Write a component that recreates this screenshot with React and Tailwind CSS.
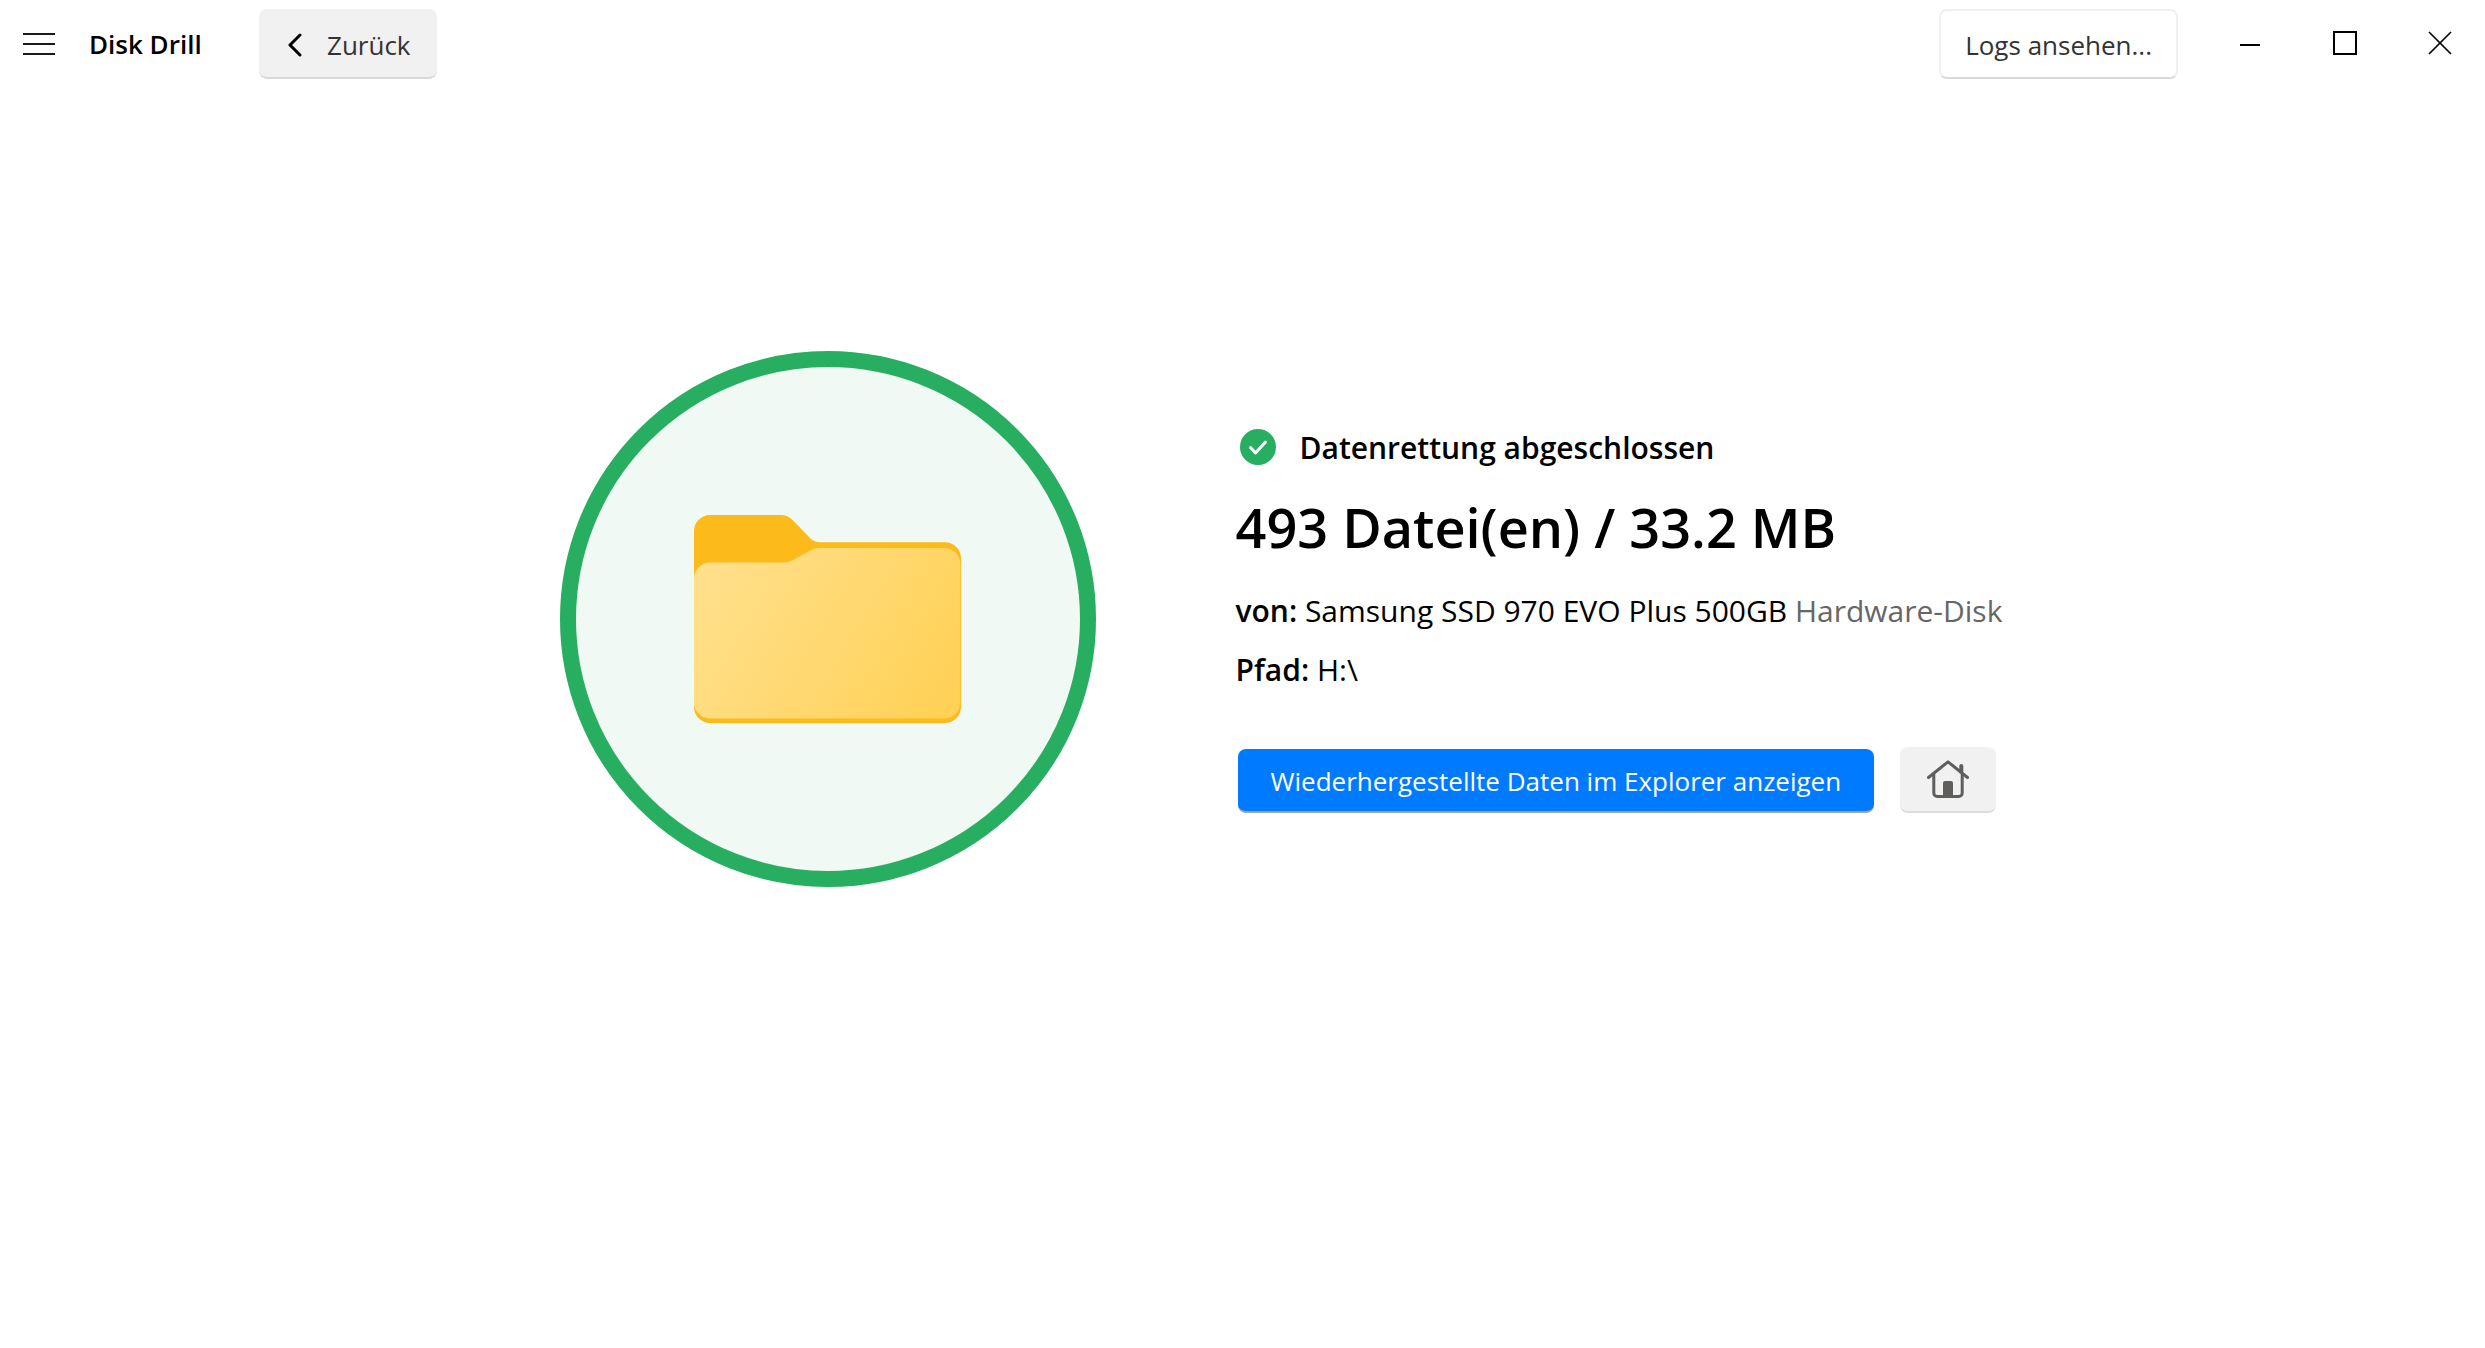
function MenuIcon() {
  return (
    <svg className="w-8 h-6" viewBox="0 0 32 24" fill="none" stroke="#1a1a1a" strokeWidth="2">
      <path d="M0 2h32M0 12h32M0 22h32" />
    </svg>
  );
}

function BackIcon() {
  return (
    <svg className="w-4 h-6" viewBox="0 0 16 24" fill="none" stroke="#000" strokeWidth="3" strokeLinecap="round" strokeLinejoin="round">
      <path d="M13 2L3 12l10 10" />
    </svg>
  );
}

function HomeIcon() {
  return (
    <svg className="w-[42px] h-[38px]" viewBox="0 0 42 38" fill="none" stroke="#605e5c" strokeWidth="3" strokeLinecap="round" strokeLinejoin="round">
      <path d="M1.500 17.500L21 1.800l19.500 15.700" />
      <path d="M6.800 14.500v18.500a3.500 3.500 0 0 0 3.500 3.500h21.400a3.500 3.500 0 0 0 3.500-3.500V14.500" />
      <path d="M34.300 6v6" strokeWidth="4" />
      <path d="M16 36V23a2 2 0 0 1 2-2h6a2 2 0 0 1 2 2v13z" fill="#605e5c" stroke="none" />
    </svg>
  );
}

function CheckIcon() {
  return (
    <svg className="w-9 h-9" viewBox="0 0 36 36" fill="none">
      <circle cx="18" cy="18" r="18" fill="#28ae60" />
      <path d="M10.500 18.500l5 5.500 10-11" stroke="#fff" strokeWidth="3" strokeLinecap="round" strokeLinejoin="round" />
    </svg>
  );
}

function FolderIcon() {
  return (
    <svg className="w-[267px] h-[208px]" viewBox="0 0 267 208">
      <defs>
        <linearGradient id="folder-front" x1="10" y1="50" x2="250" y2="190" gradientUnits="userSpaceOnUse">
          <stop offset="0" stopColor="#ffe08c" />
          <stop offset="1" stopColor="#ffd157" />
        </linearGradient>
      </defs>
      <path
        d="M0 16A16 16 0 0 1 16 0H87C92 0 96 2 99 5.500L115.500 22.500C119 26 122 27.300 127 27.300H251A16 16 0 0 1 267 43.300V192A16 16 0 0 1 251 208H16A16 16 0 0 1 0 192Z"
        fill="#fcbb1b"
      />
      <path
        d="M0 63.500A16 16 0 0 1 16 47.500H89C93 47.500 96 46.700 99 45L114 36.800C118 34.500 121 33 126 33H250A16 16 0 0 1 266.300 49V187.500A16 16 0 0 1 250 203.500H16A16 16 0 0 1 0 187.500Z"
        fill="url(#folder-front)"
      />
    </svg>
  );
}

function TitleBar() {
  return (
    <header className="flex items-center justify-between h-[88px] text-[26px]">
      <div className="flex items-center">
        <button className="pl-[23px] pr-[34px] py-4" aria-label="Menü">
          <MenuIcon />
        </button>
        <h1 className="font-semibold w-[170px] whitespace-nowrap">Disk Drill</h1>
        <button className="flex items-center gap-6 h-[70px] pt-1 pl-7 pr-[26px] rounded-lg bg-[#f1f1f1] border-b-2 border-[#d9d9d9] text-[#333]">
          <BackIcon />
          Zurück
        </button>
      </div>
      <div className="flex items-center gap-[5px]">
        <button className="h-[70px] pt-0.5 px-6 mr-[22px] rounded-lg border-2 border-[#efefef] border-b-[#d9d9d9] text-[#333]">
          Logs ansehen...
        </button>
        <button className="w-[90px] h-[88px] pb-0.5 flex items-center justify-center" aria-label="Minimieren">
          <svg className="w-6 h-6" viewBox="0 0 24 24" stroke="#000" strokeWidth="2">
            <path d="M2 14h20" />
          </svg>
        </button>
        <button className="w-[90px] h-[88px] pb-0.5 flex items-center justify-center" aria-label="Maximieren">
          <svg className="w-6 h-6" viewBox="0 0 24 24" fill="none" stroke="#000" strokeWidth="2">
            <path d="M1 1h22v22H1z" />
          </svg>
        </button>
        <button className="w-[90px] h-[88px] pb-0.5 flex items-center justify-center" aria-label="Schließen">
          <svg className="w-6 h-6" viewBox="0 0 24 24" stroke="#000" strokeWidth="1.7">
            <path d="M1 1l22 22M23 1L1 23" />
          </svg>
        </button>
      </div>
    </header>
  );
}

export default function App() {
  return (
    <div className="min-h-screen bg-white text-black font-['Open_Sans',sans-serif]">
      <TitleBar />
      <main className="flex items-center justify-center gap-[140px] pl-[90px] pt-[263px]">
        <div className="flex items-center justify-center shrink-0 w-[536px] h-[536px] rounded-full border-16 border-[#28ae60] bg-[#f0f9f4]">
          <FolderIcon />
        </div>
        <section className="w-[780px]">
          <div className="flex items-center gap-6 pl-1 h-11 text-[30px] font-semibold">
            <CheckIcon />
            Datenrettung abgeschlossen
          </div>
          <h2 className="mt-5 text-[54px] leading-[76px] font-semibold whitespace-nowrap">493 Datei(en) / 33.2 MB</h2>
          <div className="mt-4 text-[30px] leading-[59px] whitespace-nowrap">
            <p>
              <span className="font-semibold">von:</span> Samsung SSD 970 EVO Plus 500GB <span className="text-[#666]">Hardware-Disk</span>
            </p>
            <p>
              <span className="font-semibold">Pfad:</span> H:\
            </p>
          </div>
          <div className="mt-12 flex items-end gap-[26px] pl-0.5">
            <button className="h-16 pt-0.5 px-[33px] rounded-lg bg-[#007aff] border-b-2 border-[#a3a3a3] text-[26px] text-white whitespace-nowrap">
              Wiederhergestellte Daten im Explorer anzeigen
            </button>
            <button className="flex items-center justify-center w-24 h-[66px] rounded-lg bg-[#f1f1f1] border-b-2 border-[#dcdcdc]" aria-label="Startseite">
              <HomeIcon />
            </button>
          </div>
        </section>
      </main>
    </div>
  );
}
